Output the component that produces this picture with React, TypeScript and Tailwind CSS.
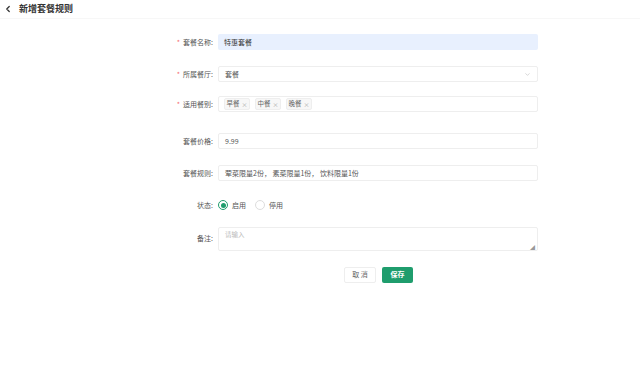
import React from 'react';
import { ChevronLeft, ChevronDown } from 'lucide-react';

const font = { fontFamily: '"Noto Sans CJK SC", "Noto Sans", sans-serif' };

function Label({ text, required }: { text: string; required?: boolean }) {
  return (
    <div className="w-[218px] shrink-0 pr-[5px] text-right text-[7px] text-[#555]">
      {required && <span className="mr-[3px] text-[#f56c6c]">*</span>}
      {text}:
    </div>
  );
}

function Tag({ text }: { text: string }) {
  return (
    <span className="flex h-[12px] w-[26px] items-center justify-center gap-[2px] rounded-[2px] border border-[#eee] bg-[#f7f7f7] text-[6.5px] text-[#666]">
      {text}
      <span className="text-[6px] text-[#aaa]">×</span>
    </span>
  );
}

export default function App() {
  return (
    <div className="h-[377px] w-[640px] bg-white" style={font}>
      <div className="flex h-[19px] items-center border-b border-[#f7f7f7] pl-[3px]">
        <ChevronLeft className="h-[10px] w-[10px] text-[#333]" strokeWidth={3} />
        <span className="ml-[6px] text-[9px] font-bold text-[#333]">新增套餐规则</span>
      </div>

      <div className="mt-[15px] flex items-center">
        <Label text="套餐名称" required />
        <div className="flex h-[16px] w-[320px] items-center rounded-[2px] bg-[#e8f0fe] px-[6px] text-[7px] text-[#333]">
          特惠套餐
        </div>
      </div>

      <div className="mt-[16px] flex items-center">
        <Label text="所属餐厅" required />
        <div className="flex h-[16px] w-[320px] items-center justify-between rounded-[2px] border border-[#eee] px-[6px] text-[7px] text-[#555]">
          套餐
          <ChevronDown className="h-[7px] w-[7px] text-[#bbb]" />
        </div>
      </div>

      <div className="mt-[14px] flex items-center">
        <Label text="适用餐别" required />
        <div className="flex h-[16px] w-[320px] items-center gap-[5px] rounded-[2px] border border-[#eee] px-[5px]">
          <Tag text="早餐" />
          <Tag text="中餐" />
          <Tag text="晚餐" />
        </div>
      </div>

      <div className="mt-[21px] flex items-center">
        <Label text="套餐价格" />
        <div className="flex h-[16px] w-[320px] items-center rounded-[2px] border border-[#eee] px-[6px] text-[7px] text-[#555]">
          9.99
        </div>
      </div>

      <div className="mt-[16px] flex items-center">
        <Label text="套餐规则" />
        <div className="flex h-[16px] w-[320px] items-center rounded-[2px] border border-[#eee] px-[6px] text-[7px] text-[#555]">
          荤菜限量2份， 素菜限量1份， 饮料限量1份
        </div>
      </div>

      <div className="mt-[19px] flex items-center">
        <Label text="状态" />
        <div className="flex items-center gap-[4px] text-[7px] text-[#555]">
          <span className="flex h-[10px] w-[10px] items-center justify-center rounded-full border border-[#1f9d6d]">
            <span className="h-[5px] w-[5px] rounded-full bg-[#1f9d6d]" />
          </span>
          <span>启用</span>
          <span className="ml-[5px] h-[10px] w-[10px] rounded-full border border-[#ddd]" />
          <span>停用</span>
        </div>
      </div>

      <div className="mt-[16px] flex items-center">
        <Label text="备注" />
        <div className="relative h-[24px] w-[320px] rounded-[2px] border border-[#eee] px-[6px] pt-[2px] text-[6.5px] text-[#bbb]">
          请输入
          <span className="absolute bottom-[1px] right-[2px] text-[5px] leading-none text-[#999]">◢</span>
        </div>
      </div>

      <div className="mt-[16px] flex justify-center gap-[6px] pl-[117px]">
        <button className="h-[16px] w-[32px] rounded-[2px] border border-[#eee] bg-white text-[7px] text-[#666]">
          取 消
        </button>
        <button className="h-[16px] w-[31px] rounded-[2px] bg-[#1f9d6d] text-[7px] font-bold text-white">
          保存
        </button>
      </div>
    </div>
  );
}
